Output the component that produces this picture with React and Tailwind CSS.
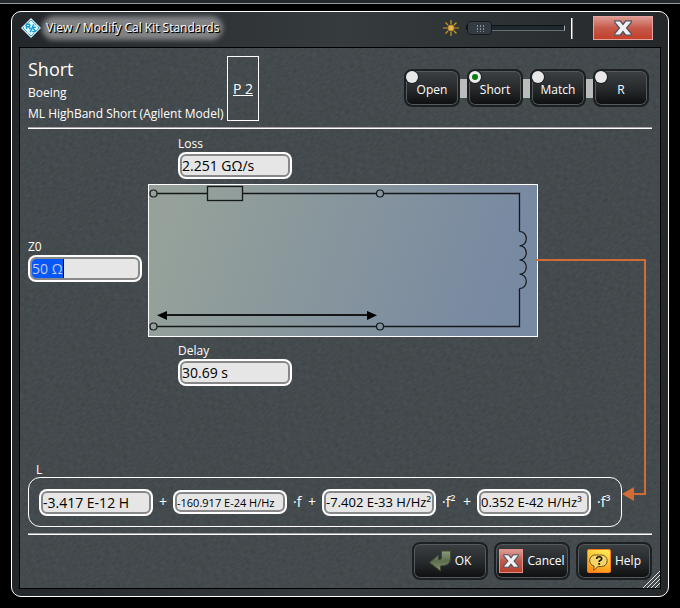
import { useEffect, useRef } from "react";

const STANDARDS = ["Open", "Short", "Match", "R"];

function Field({ label, value, className = "", textClass = "text-sm", heightClass = "h-[27px]", inputRef, caret = false }) {
  return (
    <label className={`relative block w-[114px] ${className}`}>
      {label && <span className="block h-4 text-xs leading-4">{label}</span>}
      <span className={`block rounded-lg bg-white p-[2px] ${heightClass}`}>
        <input
          ref={inputRef}
          defaultValue={value}
          aria-label={label || "Inductance coefficient"}
          className={`block h-full w-full rounded-md border-2 border-[#888] bg-[#e6e6e6] text-black outline-none selection:bg-[#0658f8] selection:text-[#c4cbdc] ${textClass}`}
        />
      </span>
      {caret && <span className="absolute bottom-1 left-[35px] h-[19px] w-px bg-black" />}
    </label>
  );
}

function Term({ power }) {
  return (
    <span className="flex flex-1 justify-between px-[6px]">
      <span>{power}</span>
      <span>+</span>
    </span>
  );
}

function Rule() {
  return <div className="h-[2px] border-b border-white bg-[#a9a4a9]" />;
}

function Circuit() {
  return (
    <svg width="390" height="153" viewBox="0 0 390 153" className="block" fill="none" stroke="#14181a" role="img" aria-label="Short equivalent circuit">
      <defs>
        <linearGradient id="plate" gradientUnits="userSpaceOnUse" x1="30" y1="20" x2="350" y2="125">
          <stop offset="0" stopColor="#95a19a" />
          <stop offset="0.5" stopColor="#86959d" />
          <stop offset="1" stopColor="#7889a2" />
        </linearGradient>
      </defs>
      <rect x="0.5" y="0.5" width="389" height="152" fill="url(#plate)" stroke="#fff" />
      <path d="M9 9.5H59M95 9.5H228M236 9.5H371.5V47.5M371.5 104.5V142.5H236M228 142.5H9" strokeWidth="1.3" />
      <rect x="59.5" y="2.5" width="35" height="14" strokeWidth="1.3" />
      <path d="M371.5 47.5c9 0 9 14.25 0 14.25c9 0 9 14.25 0 14.25c9 0 9 14.25 0 14.25c9 0 9 14.25 0 14.25" strokeWidth="1.2" />
      <circle cx="5.5" cy="9.5" r="3.5" strokeWidth="1.2" />
      <circle cx="232" cy="9.5" r="3.5" strokeWidth="1.2" />
      <circle cx="5.5" cy="142.5" r="3.5" strokeWidth="1.2" />
      <circle cx="232" cy="142.5" r="3.5" strokeWidth="1.2" />
      <path d="M16 131H222" strokeWidth="1.8" />
      <path d="M9 131.3L19 127v9zM229 131.3L219 127v9z" fill="#000" stroke="none" />
    </svg>
  );
}

function Texture() {
  return (
    <svg className="pointer-events-none absolute inset-0 h-full w-full" aria-hidden="true">
      <filter id="leather" x="0" y="0" width="100%" height="100%">
        <feTurbulence type="fractalNoise" baseFrequency="0.2 0.6" numOctaves="1" seed="4" />
        <feColorMatrix values="0 0 0 0 0  0 0 0 0 0  0 0 0 0 0  1.6 0 0 0 -0.5" />
      </filter>
      <g transform="rotate(-35)">
        <rect x="-600" y="-200" width="1500" height="1400" filter="url(#leather)" opacity="0.18" />
      </g>
    </svg>
  );
}

function Logo() {
  return (
    <svg width="20" height="20" viewBox="0 0 20 20" aria-hidden="true">
      <path d="M10 0L20 10L10 20L0 10z" fill="#e9f6fc" />
      <g fill="none" stroke="#12a0dc" strokeWidth="1.5">
        <path d="M10 1.8L18.2 10L10 18.2L1.8 10z" strokeWidth="1" strokeDasharray="8 1.500" />
        <path d="M5.500 11V6.200h2.600q1.600 1.200 0 2.500H5.500M7.600 8.700l2 2.300M9.200 14.200l3.600-8" />
        <path d="M14.800 9.600c-3-1-3.600 1-1.800 1.800s1.300 2.900-1.800 2" />
      </g>
    </svg>
  );
}

function Sun() {
  return (
    <svg width="16" height="16" viewBox="0 0 16 16" aria-hidden="true" stroke="#c89a2a" strokeWidth="1.2">
      <path d="M8 0v4M8 12v4M0 8h4M12 8h4M2.500 2.500l2.500 2.500M11 11l2.500 2.500M2.500 13.500l2.500-2.500M11 5l2.500-2.500" />
      <circle cx="8" cy="8" r="3" fill="#e3b550" stroke="#b9862c" />
    </svg>
  );
}

function Cross({ className }) {
  return (
    <svg viewBox="0 0 18 16" className={className} aria-hidden="true">
      <path d="M.8.8h5.400L9 4.400 11.800.8h5.400v1.700L12.500 8l4.700 5.500v1.700h-5.400L9 11.600 6.200 15.200H.8v-1.700L5.500 8 .8 2.500z" fill="#f1f1f4" stroke="#4d5162" strokeWidth="1.200" />
    </svg>
  );
}

function OkIcon() {
  return (
    <svg width="22" height="22" viewBox="0 0 22 22" aria-hidden="true">
      <defs>
        <linearGradient id="okFill" x1="0" y1="0" x2="0" y2="1">
          <stop offset="0" stopColor="#8a9c78" />
          <stop offset="0.5" stopColor="#5c6d4f" />
          <stop offset="1" stopColor="#85976f" />
        </linearGradient>
      </defs>
      <path d="M12.500 1H21.500V8.500Q21.500 16 11.500 16V21L.5 12.500L9.500 5V9.500Q12.500 9.500 12.500 8z" fill="url(#okFill)" stroke="#3c4835" />
    </svg>
  );
}

function CancelIcon() {
  return (
    <span className="flex size-6 items-center justify-center border border-[#e58e84] bg-linear-to-b from-[#dc9b94] from-0% via-[#bd5a4e] via-50% to-[#b8402c]">
      <Cross className="h-[14px] w-4" />
    </span>
  );
}

function HelpIcon() {
  return (
    <svg width="24" height="24" viewBox="0 0 24 24" aria-hidden="true">
      <defs>
        <linearGradient id="helpFill" x1="0.700" y1="0" x2="0.300" y2="1">
          <stop offset="0" stopColor="#ffe95a" />
          <stop offset="0.500" stopColor="#ffbe2c" />
          <stop offset="1" stopColor="#ff8a14" />
        </linearGradient>
      </defs>
      <rect x="0.500" y="0.500" width="23" height="23" rx="1.500" fill="url(#helpFill)" stroke="#ff7a20" />
      <path d="M9.500 6h5a5.500 5.500 0 0 1 0 11.500H11l-4.300 3.800.4-4.300A5.600 5.600 0 0 1 9.500 6z" fill="#f3d568" stroke="#6b5726" />
      <path d="M9.600 10q.2-2.200 2.600-2.200t2.500 2q0 1.200-1.500 1.700-1 .4-1 1.500" fill="none" stroke="#111" strokeWidth="1.600" />
      <path d="M11.300 14h1.800v1.700h-1.800z" fill="#111" />
    </svg>
  );
}

const buttonLook =
  "rounded-lg border-2 border-[#1d2022] bg-linear-to-b from-[#3c4043] from-0% via-[#26292b] via-55% to-[#0d0e0f] shadow-[inset_0_0_0_1px_#54595c]";

function ActionButton({ icon, children }) {
  return (
    <button type="button" className={`flex h-[38px] w-[76px] items-center justify-center gap-1 text-xs text-white ${buttonLook}`}>
      {icon}
      {children}
    </button>
  );
}

export default function App() {
  const z0 = useRef(null);

  useEffect(() => {
    z0.current.focus();
    z0.current.select();
  }, []);

  return (
    <div className="flex min-h-screen flex-col bg-black font-['Open_Sans','Noto_Sans',sans-serif] text-white">
      <div className="h-1 border-b border-[#9a9a9a] bg-[#23292b]" />
      <div className="flex flex-1 flex-col px-[11px] pt-[7px] pb-[11px]">
        <main className="flex flex-1 flex-col rounded-[10px] border border-white bg-linear-to-r from-[#23272a] via-[#363b3e] to-[#24282b] px-[7px] pb-[7px]">
          <header className="flex h-[35px] items-center pr-2 pb-[3px] pl-[2px]">
            <Logo />
            <h1 className="ml-[5px] rounded-lg bg-[#808284] text-xs leading-4 whitespace-nowrap shadow-[0_0_5px_4px_#808284] [text-shadow:1px_1px_1px_#000,1px_1px_0_#000]">
              View / Modify Cal Kit Standards
            </h1>
            <div className="ml-auto flex items-center">
              <Sun />
              <input
                type="range"
                aria-label="Transparency"
                defaultValue="0"
                className="ml-[7px] h-4 w-[99px] appearance-none bg-transparent [&::-webkit-slider-runnable-track]:h-[6px] [&::-webkit-slider-runnable-track]:border [&::-webkit-slider-runnable-track]:border-[#0c1215] [&::-webkit-slider-runnable-track]:border-r-[#a8acae] [&::-webkit-slider-runnable-track]:border-b-[#6b7073] [&::-webkit-slider-runnable-track]:bg-[#1c2a30] [&::-webkit-slider-thumb]:mt-[-5px] [&::-webkit-slider-thumb]:h-[14px] [&::-webkit-slider-thumb]:w-[25px] [&::-webkit-slider-thumb]:appearance-none [&::-webkit-slider-thumb]:rounded-sm [&::-webkit-slider-thumb]:border [&::-webkit-slider-thumb]:border-[#12181b] [&::-webkit-slider-thumb]:bg-[#343c43] [&::-webkit-slider-thumb]:bg-[conic-gradient(#343c43_75%,#8b9196_0)] [&::-webkit-slider-thumb]:bg-[length:3px_3px] [&::-webkit-slider-thumb]:shadow-[inset_0_0_0_2px_#343c43,inset_7px_0_0_#343c43,inset_-7px_0_0_#343c43]"
              />
              <span className="ml-[6px] h-[21px] w-[2px] border-r border-[#8d8d8d] bg-white" />
              <button
                type="button"
                aria-label="Close"
                className="ml-5 flex h-6 w-[60px] items-center justify-center border border-[#e2a49c] bg-linear-to-b from-[#dc9a92] from-0% via-[#c6594a] via-50% to-[#c3402a]"
              >
                <Cross className="h-4 w-[18px]" />
              </button>
            </div>
          </header>

          <section className="relative flex flex-1 flex-col border border-black bg-[#484f52]">
            <Texture />
            <div className="relative flex flex-1 flex-col p-2">
              <div className="flex h-[71px] items-start">
                <div className="w-[199px] whitespace-nowrap">
                  <h2 className="text-lg leading-[26px]">Short</h2>
                  <p className="text-xs leading-[21px]">Boeing</p>
                  <p className="text-xs leading-[21px]">ML HighBand Short (Agilent Model)</p>
                </div>
                <button type="button" className="h-[65px] w-8 border border-white text-sm whitespace-nowrap underline">
                  P 2
                </button>
                <div className="mt-[13px] mr-[3px] ml-auto flex items-center" role="radiogroup" aria-label="Standard type">
                  {STANDARDS.map((name, i) => (
                    <div key={name} className="flex items-center">
                      {i > 0 && <span className="h-[19px] w-[7px] bg-[#bcbcbc]" />}
                      <label className={`relative flex h-[38px] w-14 items-center justify-center pt-1 text-xs ${buttonLook}`}>
                        <input
                          type="radio"
                          name="standard"
                          defaultChecked={name === "Short"}
                          className="absolute top-0 left-0 size-3 appearance-none rounded-full bg-[#e8e8e8] shadow-[0_0_0_1px_#1d2022] checked:border-[3px] checked:border-[#eee] checked:bg-[#0a7a12]"
                        />
                        {name}
                      </label>
                    </div>
                  ))}
                </div>
              </div>
              <Rule />

              <div className="grid grid-cols-[120px_1fr] pt-[7px]">
                <Field label="Loss" value="2.251 GΩ/s" className="col-start-2 ml-[30px]" />
                <Field label="Z0" value="50 Ω" inputRef={z0} className="mt-[60px] self-start" caret />
                <div className="relative mt-[5px]">
                  <Circuit />
                  {/* Callout from the inductor to its coefficient row */}
                  <div className="absolute top-[75px] right-[6px] left-[388px] h-[236px] border-t-2 border-r-2 border-[#d06c34]">
                    <svg width="24" height="14" viewBox="0 0 24 14" className="absolute right-[-2px] bottom-[-6px]" aria-hidden="true">
                      <path d="M0 7L12 0V14z" fill="#d06c34" />
                      <path d="M11 7H24" stroke="#d06c34" strokeWidth="2" />
                    </svg>
                  </div>
                </div>
                <Field label="Delay" value="30.69 s" className="col-start-2 mt-[6px] ml-[30px]" />
              </div>

              <div className="mt-auto mr-[30px]">
                <p id="l-label" className="pl-2 text-xs leading-[15px]">L</p>
                <div role="group" aria-labelledby="l-label" className="flex h-[50px] items-center rounded-xl border border-white pl-[10px] text-sm whitespace-nowrap">
                  <Field value="-3.417 E-12 H" />
                  <span className="w-5 text-center">+</span>
                  <Field value="-160.917 E-24 H/Hz" textClass="text-[11px]" heightClass="h-6" />
                  <span className="flex w-[35px]"><Term power="·f" /></span>
                  <Field value="-7.402 E-33 H/Hz²" textClass="text-[13px]" />
                  <span className="flex w-[41px]"><Term power="·f²" /></span>
                  <Field value="0.352 E-42 H/Hz³" textClass="text-[13px]" />
                  <span className="flex-1 pl-[6px]">·f³</span>
                </div>
              </div>
              <div className="mt-[6px]">
                <Rule />
              </div>
              <div className="mt-[7px] flex justify-end gap-[6px]">
                <ActionButton icon={<OkIcon />}>OK</ActionButton>
                <ActionButton icon={<CancelIcon />}>Cancel</ActionButton>
                <ActionButton icon={<HelpIcon />}>Help</ActionButton>
              </div>
            </div>
            <svg width="17" height="17" viewBox="0 0 17 17" className="absolute right-0 bottom-0" stroke="#e4e4e4" aria-hidden="true">
              <path d="M0 17L17 0M4 17L17 4M8 17L17 8M12 17L17 12" />
            </svg>
          </section>
        </main>
      </div>
    </div>
  );
}
